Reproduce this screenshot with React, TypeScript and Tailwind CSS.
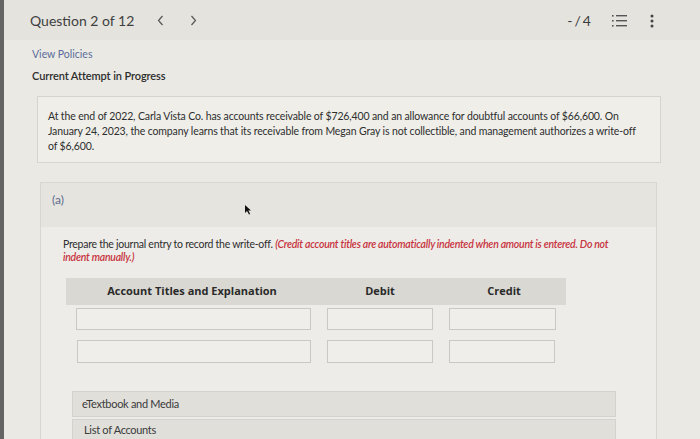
import React from "react";

const lato = { fontFamily: "Lato, 'Open Sans', sans-serif" } as React.CSSProperties;

function Input({ w, h }: { w: string; h: string }) {
  return <div className={`${w} ${h} border border-[#c9c8c3] bg-[#efeeea]`} />;
}

export default function App() {
  return (
    <div className="w-[700px] h-[439px] overflow-hidden flex bg-[#e7e6e1] relative" style={lato}>
      <div className="w-[4px] h-full bg-[#646464]" />
      <div className="flex-1 flex flex-col">
        {/* Header */}
        <div className="h-[40px] shrink-0 flex items-center pl-[26px] pr-[46px] pt-[1px] bg-[#e4e3de]">
          <span className="text-[14px] text-[#404040]">Question 2 of 12</span>
          <svg className="ml-[23px]" width="7" height="11" viewBox="0 0 7 11">
            <path d="M5.5 1 L1.5 5.5 L5.5 10" fill="none" stroke="#555" strokeWidth="1.2" />
          </svg>
          <svg className="ml-[26px]" width="7" height="11" viewBox="0 0 7 11">
            <path d="M1.5 1 L5.5 5.5 L1.5 10" fill="none" stroke="#555" strokeWidth="1.2" />
          </svg>
          <div className="ml-auto flex items-center">
            <span className="text-[14px] text-[#3c3c3c] tracking-[2px]">-/4</span>
            <svg className="ml-[19px]" width="16" height="14" viewBox="0 0 16 14">
              <g fill="#555">
                <rect x="0" y="1" width="1.6" height="1.6" />
                <rect x="0" y="6" width="1.6" height="1.6" />
                <rect x="0" y="11" width="1.6" height="1.6" />
                <rect x="4" y="1" width="11" height="1.4" />
                <rect x="4" y="6" width="11" height="1.4" />
                <rect x="4" y="11" width="11" height="1.4" />
              </g>
            </svg>
            <svg className="ml-[22px]" width="4" height="14" viewBox="0 0 4 14">
              <g fill="#444">
                <circle cx="2" cy="2" r="1.5" />
                <circle cx="2" cy="7" r="1.5" />
                <circle cx="2" cy="12" r="1.5" />
              </g>
            </svg>
          </div>
        </div>

        <div className="flex-1 flex flex-col bg-[#eae9e4]">
          <div className="pl-[28px] pt-[6px] text-[10.5px] text-[#5b6d9a] leading-[16px]">View Policies</div>
          <div className="pl-[28px] mt-[6px] text-[11px] text-[#2d2d2d] font-semibold leading-[16px] tracking-[-0.1px]">Current Attempt in Progress</div>

          {/* Question box */}
          <div className="ml-[33px] mt-[12px] w-[624px] h-[67px] shrink-0 border border-[#d6d4ce] bg-[#efeee9] pl-[10px] pt-[12px] text-[10.5px] leading-[15px] text-[#2e2e2e] tracking-[-0.13px] whitespace-nowrap">
            At the end of 2022, Carla Vista Co. has accounts receivable of $726,400 and an allowance for doubtful accounts of $66,600. On
            <br />
            January 24, 2023, the company learns that its receivable from Megan Gray is not collectible, and management authorizes a write-off
            <br />
            of $6,600.
          </div>

          {/* Part (a) */}
          <div className="ml-[36px] mt-[19px] w-[617px] flex-1 border border-[#d8d6d0] border-b-0 bg-[#edece8] flex flex-col">
            <div className="h-[44px] shrink-0 bg-[#e5e4df] pl-[11px] pt-[8px] text-[12px] text-[#5c6b8c]">(a)</div>
            <div className="pl-[22px] pt-[11px] text-[10.5px] leading-[12.5px] text-[#2e2e2e] tracking-[-0.26px] whitespace-nowrap">
              Prepare the journal entry to record the write-off.{" "}
              <span className="italic font-semibold text-[#c83340]">
                (Credit account titles are automatically indented when amount is entered. Do not
                <br />
                indent manually.)
              </span>
            </div>

            {/* Table */}
            <div className="ml-[25px] mt-[15px] w-[500px] h-[27px] shrink-0 bg-[#d9d8d3] flex items-center text-[11px] font-bold text-[#2a2a2a]" style={{ fontFamily: "'Open Sans', Lato, sans-serif" }}>
              <div className="w-[252px] text-center">Account Titles and Explanation</div>
              <div className="w-[124px] text-center">Debit</div>
              <div className="w-[124px] text-center">Credit</div>
            </div>
            <div className="ml-[35px] mt-[3px] flex gap-[16px]">
              <Input w="w-[235px]" h="h-[22px]" />
              <Input w="w-[106px]" h="h-[22px]" />
              <Input w="w-[107px]" h="h-[22px]" />
            </div>
            <div className="ml-[36px] mt-[10px] flex gap-[16px]">
              <Input w="w-[234px]" h="h-[23px]" />
              <Input w="w-[106px]" h="h-[23px]" />
              <Input w="w-[106px]" h="h-[23px]" />
            </div>

            <div className="ml-[31px] mt-[28px] w-[544px] h-[26px] shrink-0 bg-[#e0dfda] border border-[#d3d2cc] flex items-center pl-[9px] text-[11px] text-[#3a3a3a] tracking-[-0.3px]">
              eTextbook and Media
            </div>
            <div className="ml-[31px] mt-[2px] w-[544px] flex-1 min-h-[18px] bg-[#e0dfda] border border-[#d3d2cc] border-b-0 pl-[11px] pt-[2px] text-[11px] text-[#3a3a3a] tracking-[-0.3px]">
              List of Accounts
            </div>
          </div>
          <div className="h-[2px] shrink-0 bg-[#7a7a7a]" />
        </div>
      </div>

      {/* mouse cursor */}
      <svg className="absolute left-[244px] top-[205px]" width="8" height="10" viewBox="0 0 8 10">
        <path d="M1 0 L1 8 L3 6 L5 9.5 L6.2 9 L4.3 5.6 L7 5.4 Z" fill="#111" />
      </svg>
    </div>
  );
}
